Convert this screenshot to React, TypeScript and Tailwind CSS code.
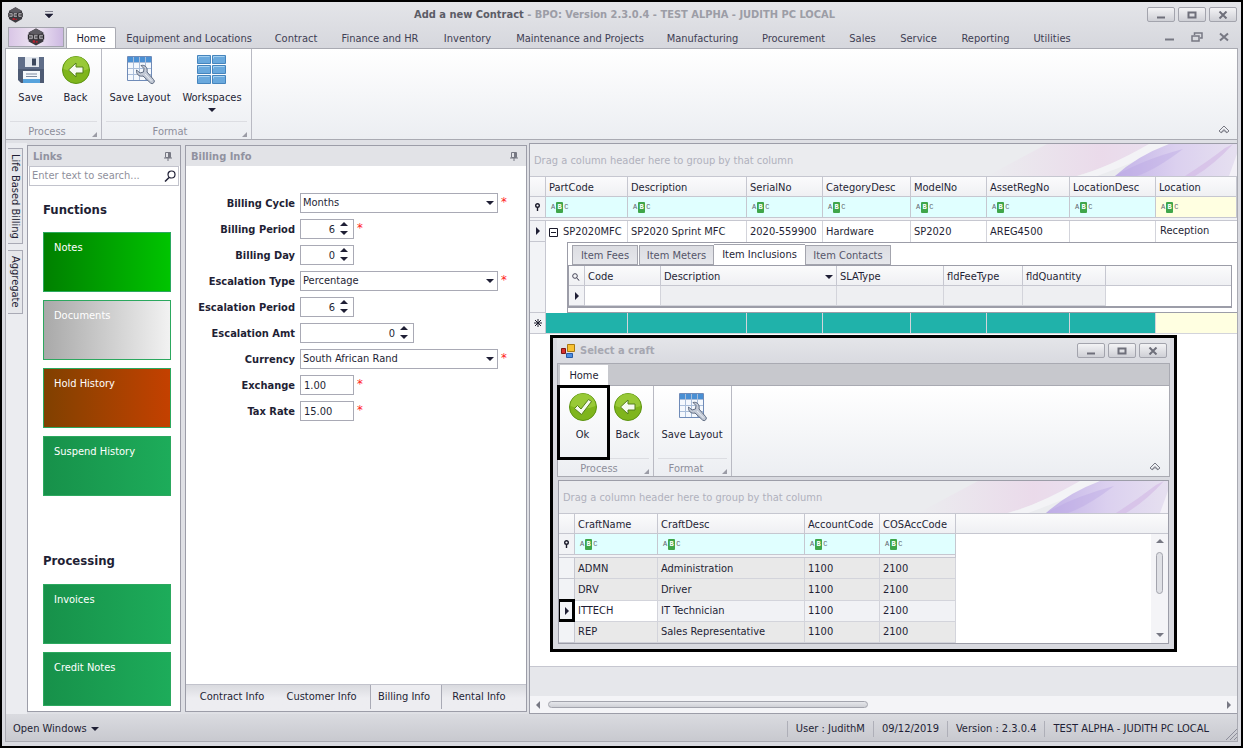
import React, { useState } from 'react';
import clsx from 'clsx';

const ribbonTabs = [
  { label: 'Equipment and Locations', width: 'w-[146px]' },
  { label: 'Contract', width: 'w-[68px]' },
  { label: 'Finance and HR', width: 'w-[100px]' },
  { label: 'Inventory', width: 'w-[75px]' },
  { label: 'Maintenance and Projects', width: 'w-[150px]' },
  { label: 'Manufacturing', width: 'w-[95px]' },
  { label: 'Procurement', width: 'w-[87px]' },
  { label: 'Sales', width: 'w-[51px]' },
  { label: 'Service', width: 'w-[61px]' },
  { label: 'Reporting', width: 'w-[73px]' },
  { label: 'Utilities', width: 'w-[60px]' },
];

const functionTiles = [
  { label: 'Notes', style: 'h-[60px] from-[#008000] to-[#00c400]' },
  { label: 'Documents', style: 'h-[60px] from-[#a9a9a9] to-[#f2f2f2]' },
  { label: 'Hold History', style: 'h-[60px] from-[#804000] to-[#c44000]' },
  { label: 'Suspend History', style: 'h-[60px] from-[#17914a] to-[#1dac5a]' },
];

const processingTiles = [
  { label: 'Invoices', style: 'h-[60px] from-[#17914a] to-[#1dac5a]' },
  { label: 'Credit Notes', style: 'h-[54px] from-[#17914a] to-[#1dac5a]' },
];

const itemColumns = [
  { name: 'PartCode', width: 'w-[82px]' },
  { name: 'Description', width: 'w-[119px]' },
  { name: 'SerialNo', width: 'w-[76px]' },
  { name: 'CategoryDesc', width: 'w-[88px]' },
  { name: 'ModelNo', width: 'w-[76px]' },
  { name: 'AssetRegNo', width: 'w-[83px]' },
  { name: 'LocationDesc', width: 'w-[86px]' },
  { name: 'Location', width: '' },
];

const craftColumns = [
  { name: 'CraftName', width: 'w-[83px]' },
  { name: 'CraftDesc', width: 'w-[147px]' },
  { name: 'AccountCode', width: 'w-[75px]' },
  { name: 'COSAccCode', width: 'w-[76px]' },
];

const crafts = [
  ['ADMN', 'Administration', '1100', '2100'],
  ['DRV', 'Driver', '1100', '2100'],
  ['ITTECH', 'IT Technician', '1100', '2100'],
  ['REP', 'Sales Representative', '1100', '2100'],
];

const headCell = 'h-5 border-r border-b border-[#c6c7d0] bg-linear-to-b from-[#fbfbfc] to-[#eff0f3] px-[3px] pt-0.5 text-left font-normal whitespace-nowrap';
const sideCell = 'border-r border-b border-[#c6c7d0] bg-[#f2f3f6]';

/* ---------- icons ---------- */

const LogoIcon = ({ className }: { className: string }) => (
  <svg viewBox="0 0 20 22" className={className} aria-hidden="true">
    <path d="M10 0.5 19 5.5V16.5L10 21.5 1 16.5V5.5Z" fill="#3c3a40" />
    <path d="M10 0.5 19 5.5 10 10 1 5.5Z" fill="#5d5b62" />
    <path d="M0 8h20v6H0z" fill="#2a282c" />
    <path d="M1.500 9h4M1.500 11h4M1.500 13h4M5.500 9v4M8 9h4M8 11h4M8 13h4M8 9v4M14.500 9h4M14.500 11h4M14.500 13h4M14.500 9v4" stroke="#c9c6cc" strokeWidth="1" fill="none" />
    <path d="M6 15h3v3H6zM10 16h2v2h-2z" fill="#b3202c" />
  </svg>
);

const SaveIcon = () => (
  <svg width="28" height="28" viewBox="0 0 28 28" aria-hidden="true">
    <path d="M1 1h26v26H4L1 24Z" fill="#4d5a73" />
    <path d="M1 1h26v12H1z" fill="#5f6d88" />
    <path d="M8 1h14v10H8z" fill="#e3e8ef" />
    <path d="M15 2.500h4v7h-4z" fill="#3d485e" />
    <path d="M6 15h17v12H6z" fill="#f5f8fc" />
    <path d="M6 23h17v4H6z" fill="#57a3dd" />
    <path d="M9 18h11M9 20.500h11" stroke="#7e8aa0" />
  </svg>
);

const GreenDisc = ({ children }: { children: React.ReactNode }) => (
  <svg width="28" height="28" viewBox="0 0 28 28" aria-hidden="true">
    <circle cx="14" cy="14" r="13.5" fill="#7fb51c" stroke="#5c9310" />
    <path d="M1.500 13a12.500 12.500 0 0 1 25 0q-12.500 5-25 0" fill="#a3d143" opacity="0.7" />
    {children}
  </svg>
);

const BackIcon = () => (
  <GreenDisc>
    <path d="M6.500 14 14 7v4h7v6h-7v4Z" fill="#f6faf0" stroke="#55801a" strokeLinejoin="round" />
  </GreenDisc>
);

const OkIcon = () => (
  <GreenDisc>
    <path d="M5.500 15.500 8.500 12.500 12 16 19.500 6.500 22.500 8.500 12.500 21.500Z" fill="#f6faf0" stroke="#55801a" strokeLinejoin="round" />
  </GreenDisc>
);

const SaveLayoutIcon = () => (
  <svg width="30" height="30" viewBox="0 0 30 30" aria-hidden="true">
    <path d="M2.500 1.500h24v24h-24z" fill="#f4f8fd" stroke="#6f8bb8" />
    <path d="M3 2h23v5H3z" fill="#4a90d4" />
    <path d="M3 7.500h23M3 13.500h23M3 19.500h23M8.500 2v23M14.500 2v23M20.500 2v23" stroke="#a9bdd9" />
    <path d="M16 10.500c4-1 7 2 6 6.500l6.500 7.500a2.200 2.200 0 0 1-3 3.500l-7.500-7c-4 1-7-2-6.500-6l3.500 3 3.500-1 .500-3.500Z" fill="#c3cad6" stroke="#5d6a80" strokeLinejoin="round" />
    <path d="M20 19l6.500 7" stroke="#e9edf3" />
  </svg>
);

const WorkspacesIcon = () => (
  <svg width="30" height="30" viewBox="0 0 30 30" aria-hidden="true">
    {[0.5, 10.5, 20.5].map((y) => (
      <g key={y} fill="#6aa9dd" stroke="#4685bd">
        <path d={`M.5 ${y}h13v8h-13z`} />
        <path d={`M15.500 ${y}h13v8h-13z`} />
        <path d={`M1.500 ${y + 3}v-2h11M16.500 ${y + 3}v-2h11`} fill="none" stroke="#a5d0f0" />
      </g>
    ))}
  </svg>
);

const Triangle = ({ dir, className }: { dir: 'up' | 'down' | 'left' | 'right'; className?: string }) => {
  const paths = {
    up: 'M0 5 4 1 8 5Z',
    down: 'M0 2h8L4 6Z',
    left: 'M6 0v8L2 4Z',
    right: 'M2 0v8l4-4Z',
  };
  return (
    <svg width="8" height="8" viewBox="0 0 8 8" className={clsx('shrink-0', className)} aria-hidden="true">
      <path d={paths[dir]} fill="currentColor" />
    </svg>
  );
};

const PinIcon = () => (
  <svg width="8" height="9" viewBox="0 0 8 9" aria-hidden="true">
    <path d="M1.500.5h5v5h-5zM0 6h8M4 6v3" fill="none" stroke="#777883" />
    <path d="M4 1h2.500v4.500H4z" fill="#777883" />
  </svg>
);

const FilterPin = () => (
  <svg width="7" height="8" viewBox="0 0 7 8" className="mx-auto" aria-hidden="true">
    <circle cx="3.5" cy="2.500" r="1.800" fill="none" stroke="#1b1b2b" strokeWidth="1.400" />
    <path d="M3.500 4v4" stroke="#1b1b2b" strokeWidth="1.400" />
  </svg>
);

const SearchIcon = ({ className }: { className: string }) => (
  <svg viewBox="0 0 12 12" className={className} aria-hidden="true">
    <circle cx="7.500" cy="4.500" r="3.500" fill="none" stroke="currentColor" strokeWidth="1.200" />
    <path d="M5 7.500 1 11.500" stroke="currentColor" strokeWidth="1.500" />
  </svg>
);

const CollapseIcon = () => (
  <svg width="12" height="10" viewBox="0 0 12 10" aria-hidden="true">
    <path d="M1 6 6 1l5 5-2 1.500-3-3-3 3ZM3 8 6 5.500 9 8" fill="none" stroke="#777883" />
  </svg>
);

const FormIcon = () => (
  <svg width="14" height="14" viewBox="0 0 14 14" aria-hidden="true">
    <path d="M.5 4.500h4v5h-4z" fill="#d8302c" stroke="#7d1512" />
    <path d="M6.500.5h7v7h-7z" fill="#f7c234" stroke="#a87912" />
    <path d="M5.500 9.500h6v4h-6z" fill="#4d8de0" stroke="#275aa5" />
  </svg>
);

const Swoosh = ({ id }: { id: string }) => (
  <svg width="250" height="32" viewBox="0 0 250 32" className="shrink-0" aria-hidden="true">
    <defs>
      <linearGradient id={id} x1="0" x2="1">
        <stop offset="0" stopColor="#ebecef" />
        <stop offset="0.7" stopColor="#ead6e9" />
        <stop offset="1" stopColor="#e9dcee" />
      </linearGradient>
      <linearGradient id={`${id}-b`} x1="0" x2="1">
        <stop offset="0" stopColor="#c3b3e8" />
        <stop offset="0.5" stopColor="#dbd0ef" />
        <stop offset="1" stopColor="#e6e0f0" />
      </linearGradient>
    </defs>
    <path d="M0 32 60 0h105Q130 20 90 32Z" fill={`url(#${id})`} opacity="0.8" />
    <path d="M110 32Q160 14 182 0h-20Q120 24 90 32Z" fill="#f3f3f6" />
    <path d="M128 32Q150 12 182 0H250V32Z" fill={`url(#${id}-b)`} />
    <path d="M128 32Q155 16 196 5q-26 20-46 27Z" fill="#b8a5e4" opacity="0.4" />
    <path d="M198 32Q220 18 238 4l8-4Q228 20 208 32Z" fill="#d2b8e4" opacity="0.6" />
    <path d="M250 10v22h-8Z" fill="#f3f1f7" />
  </svg>
);

/* ---------- small pieces ---------- */

const AbcMark = () => (
  <span className="flex items-center gap-px font-['Liberation_Mono',monospace] text-[7px] leading-[11px] text-[#5f656c]">
    A<span className="flex h-[11px] w-[7px] items-center justify-center rounded-[1px] bg-[#3fa64a] font-bold text-white">B</span>C
  </span>
);

const WindowButtons = () => {
  const base = 'flex h-[15px] w-7 items-center justify-center rounded-[2px] border border-[#a3a4ad] bg-linear-to-b from-[#f3f3f5] to-[#cfd0d6]';
  return (
    <div className="flex gap-[3px] text-[#6e6f7a]">
      <button type="button" aria-label="Minimize" className={base}>
        <svg width="10" height="8" viewBox="0 0 10 8"><path d="M1 6.500h8" stroke="currentColor" strokeWidth="2" /></svg>
      </button>
      <button type="button" aria-label="Maximize" className={base}>
        <svg width="10" height="8" viewBox="0 0 10 8"><path d="M1.500 1.500h7v5h-7z" fill="none" stroke="currentColor" strokeWidth="2" /></svg>
      </button>
      <button type="button" aria-label="Close" className={base}>
        <svg width="10" height="8" viewBox="0 0 10 8"><path d="M1.500.5 8.500 7.500M8.500.5 1.500 7.500" stroke="currentColor" strokeWidth="2" /></svg>
      </button>
    </div>
  );
};

interface RibbonButtonProps {
  label: string;
  icon: React.ReactNode;
  wide?: boolean;
  hasMenu?: boolean;
}

const RibbonButton: React.FC<RibbonButtonProps> = ({ label, icon, wide, hasMenu }) => (
  <button type="button" className={clsx('flex flex-col items-center pt-1.5', wide ? 'w-[72px]' : 'w-[45px]')}>
    <span className="flex h-[30px] items-center">{icon}</span>
    <span className="mt-[5px] leading-4 whitespace-nowrap">{label}</span>
    {hasMenu && <Triangle dir="down" />}
  </button>
);

const RibbonGroup = ({ caption, children }: { caption: string; children: React.ReactNode }) => (
  <div className="flex flex-col border-r border-[#b9bac3]">
    <div className="flex flex-1 pr-[3px] pl-0.5">{children}</div>
    <div className="mx-1 flex h-[18px] items-center border-t border-[#dcdde2] text-[#8d8e9b]">
      <span className="flex-1 pt-0.5 pr-2 text-center">{caption}</span>
      <svg width="5" height="5" viewBox="0 0 5 5" className="mt-2" aria-hidden="true"><path d="M5 0v5H0Z" fill="#9b9ca6" /></svg>
    </div>
  </div>
);

const PanelHeader = ({ title }: { title: string }) => (
  <div className="flex h-5 items-center justify-between bg-[#e2e3e7] pr-2 pl-[5px]">
    <h2 className="pt-0.5 font-bold text-[#9192a0]">{title}</h2>
    <PinIcon />
  </div>
);

const Tile = ({ label, style }: { label: string; style: string }) => (
  <button type="button" className={clsx('flex items-start border border-[#2ca85f] bg-linear-to-r px-2.5 pt-2 leading-[14px] text-white', style)}>
    {label}
  </button>
);

const GroupBar = ({ id }: { id: string }) => (
  <div className="flex h-[33px] items-center justify-between border-b border-[#c6c7d0] bg-[#ebecef] pl-1">
    <span className="pt-0.5 text-[#b0b1bd]">Drag a column header here to group by that column</span>
    <Swoosh id={id} />
  </div>
);

interface FieldProps {
  id: string;
  label: string;
  value: string;
  required?: boolean;
}

const Star = () => <span className="ml-[3px] self-start text-[13px] leading-[18px] text-[#ff1a1a]">*</span>;

const FieldRow = ({ id, label, required, children }: { id: string; label: string; required?: boolean; children: React.ReactNode }) => (
  <div className="flex h-5 items-center">
    <label htmlFor={id} className="w-[114px] pt-0.5 pr-[5px] text-right font-bold whitespace-nowrap">{label}</label>
    {children}
    {required && <Star />}
  </div>
);

const SelectField: React.FC<FieldProps> = ({ id, label, value, required }) => (
  <FieldRow id={id} label={label} required={required}>
    <span className="relative flex">
      <select id={id} className="h-5 w-[198px] appearance-none border border-[#a9aab5] bg-white px-0.5 leading-[18px]">
        <option>{value}</option>
      </select>
      <Triangle dir="down" className="pointer-events-none absolute top-1.5 right-1" />
    </span>
  </FieldRow>
);

const SpinField: React.FC<FieldProps & { wide?: boolean }> = ({ id, label, value, required, wide }) => {
  const [count, setCount] = useState(Number(value));
  return (
    <FieldRow id={id} label={label} required={required}>
      <span className={clsx('flex h-5 border border-[#a9aab5] bg-white', wide ? 'w-[114px]' : 'w-[54px]')}>
        <input id={id} type="text" inputMode="numeric" value={count} onChange={(e) => setCount(Number(e.target.value) || 0)} className="w-0 flex-1 pt-px text-right" />
        <span className="flex w-[18px] flex-col items-center justify-between py-px">
          <button type="button" aria-label={`Increase ${label}`} onClick={() => setCount(count + 1)} className="h-2"><Triangle dir="up" /></button>
          <button type="button" aria-label={`Decrease ${label}`} onClick={() => setCount(count - 1)} className="h-2"><Triangle dir="down" /></button>
        </span>
      </span>
    </FieldRow>
  );
};

const TextField: React.FC<FieldProps> = ({ id, label, value, required }) => (
  <FieldRow id={id} label={label} required={required}>
    <input id={id} type="text" defaultValue={value} className="h-5 w-[54px] border border-[#a9aab5] bg-white px-[3px]" />
  </FieldRow>
);

/* ---------- panels ---------- */

const LinksPanel = () => (
  <section className="flex w-[154px] shrink-0 flex-col border border-[#9c9da8] bg-white">
    <PanelHeader title="Links" />
    <div className="mx-px flex h-5 items-center border border-[#c2c3cc] pr-0.5 pl-0.5">
      <input type="search" aria-label="Search links" placeholder="Enter text to search..." className="w-0 flex-1 placeholder:text-[#8f909c]" />
      <SearchIcon className="size-3" />
    </div>
    <div className="flex flex-col gap-2 pt-4 pr-[9px] pl-[15px]">
      <h3 className="mb-1.5 text-[13px] leading-4 font-bold">Functions</h3>
      {functionTiles.map((tile) => <Tile key={tile.label} {...tile} />)}
    </div>
    <div className="flex flex-col gap-2 pt-14 pr-[9px] pb-[5px] pl-[15px]">
      <h3 className="mb-1.5 text-[13px] leading-[18px] font-bold">Processing</h3>
      {processingTiles.map((tile) => <Tile key={tile.label} {...tile} />)}
    </div>
  </section>
);

const BillingPanel = () => (
  <section className="flex w-[342px] shrink-0 flex-col border border-[#9c9da8] bg-white">
    <PanelHeader title="Billing Info" />
    <form className="flex flex-1 flex-col gap-1.5 pt-[27px]">
      <SelectField id="cycle" label="Billing Cycle" value="Months" required />
      <SpinField id="period" label="Billing Period" value="6" required />
      <SpinField id="day" label="Billing Day" value="0" />
      <SelectField id="escType" label="Escalation Type" value="Percentage" required />
      <SpinField id="escPeriod" label="Escalation Period" value="6" />
      <SpinField id="escAmt" label="Escalation Amt" value="0" wide />
      <SelectField id="currency" label="Currency" value="South African Rand" required />
      <TextField id="exchange" label="Exchange" value="1.00" required />
      <TextField id="tax" label="Tax Rate" value="15.00" required />
    </form>
    <nav className="flex h-[27px] items-start border-t border-[#c2c3cc] bg-linear-to-b from-[#d9dadf] to-[#ededf1] to-50% pl-px leading-6">
      <button type="button" className="w-[90px]">Contract Info</button>
      <button type="button" className="w-[94px] border-r border-[#a9aab5] pr-1">Customer Info</button>
      <button type="button" className="w-[71px] border-r border-[#a9aab5] bg-[#ededf1] pr-1">Billing Info</button>
      <button type="button" className="w-[74px]">Rental Info</button>
    </nav>
  </section>
);

const InclusionsDetail = () => {
  const tab = 'h-5 border border-[#a3a4ad] bg-linear-to-b from-[#dcdde2] to-[#e6e7eb] pt-0.5 text-[#55566a]';
  const lockedCell = 'border-r border-b border-[#d3d4db] bg-[#eeeff2]';
  return (
    <div className="ml-[21px] border border-r-0 border-[#9c9da8] bg-white pt-px pb-1">
      <div className="flex h-[21px] items-end pl-1">
        <button type="button" className={clsx(tab, 'w-[66px]')}>Item Fees</button>
        <button type="button" className={clsx(tab, 'ml-px w-[75px]')}>Item Meters</button>
        <button type="button" className="h-[21px] w-[91px] border-t border-[#a3a4ad] bg-white">Item Inclusions</button>
        <button type="button" className={clsx(tab, 'w-[86px]')}>Item Contacts</button>
      </div>
      <div className="mr-[5px] border border-b-2 border-[#9c9da8]">
        <table className="w-full table-fixed border-separate border-spacing-0">
          <thead>
            <tr>
              <th className={clsx(headCell, 'w-4')}><SearchIcon className="size-2 -scale-x-100" /></th>
              <th className={clsx(headCell, 'w-[76px]')}>Code</th>
              <th className={clsx(headCell, 'w-[176px]')}>
                <span className="flex items-center justify-between">Description <Triangle dir="down" /></span>
              </th>
              <th className={clsx(headCell, 'w-[107px]')}>SLAType</th>
              <th className={clsx(headCell, 'w-[79px]')}>fldFeeType</th>
              <th className={clsx(headCell, 'w-[83px]')}>fldQuantity</th>
              <th className={clsx(headCell, 'border-r-0')} />
            </tr>
          </thead>
          <tbody>
            <tr>
              <td className={clsx(sideCell, 'h-5')}><Triangle dir="right" className="mx-auto" /></td>
              <td className="border-r border-b border-[#d3d4db]" />
              <td className={lockedCell} />
              <td className={lockedCell} />
              <td className={lockedCell} />
              <td className={lockedCell} />
              <td />
            </tr>
          </tbody>
        </table>
      </div>
    </div>
  );
};

const ItemsTable = () => {
  const cell = 'h-[21px] border-r border-[#d3d4db] px-[3px] pt-px whitespace-nowrap';
  return (
    <table className="w-full table-fixed border-separate border-spacing-0">
      <thead>
        <tr>
          <th className={clsx(headCell, 'w-4')} />
          {itemColumns.map((col) => (
            <th key={col.name} className={clsx(headCell, col.width)}>{col.name}</th>
          ))}
        </tr>
        <tr>
          <td className={clsx(sideCell, 'h-[21px]')}><FilterPin /></td>
          {itemColumns.map((col) => (
            <td key={col.name} className={clsx('border-r border-b border-[#c6c7d0] px-[5px]', col.name === 'Location' ? 'bg-[#ffffe1]' : 'bg-[#e0ffff]')}>
              <AbcMark />
            </td>
          ))}
        </tr>
        <tr><td colSpan={9} className="h-[3px] border-b border-[#c6c7d0] bg-[#f2f3f6]" /></tr>
      </thead>
      <tbody>
        <tr>
          <td className={sideCell}><Triangle dir="right" className="mx-auto" /></td>
          <td className={cell}>
            <span className="flex items-center gap-[5px]">
              <svg width="9" height="9" viewBox="0 0 9 9" className="shrink-0" aria-label="Collapse"><path d="M.5.5h8v8h-8zM2 4.500h5" fill="none" stroke="#1b1b2b" /></svg>
              SP2020MFC
            </span>
          </td>
          <td className={cell}>SP2020 Sprint MFC</td>
          <td className={cell}>2020-559900</td>
          <td className={cell}>Hardware</td>
          <td className={cell}>SP2020</td>
          <td className={cell}>AREG4500</td>
          <td className={cell} />
          <td className="px-1 pb-0.5">Reception</td>
        </tr>
        <tr>
          <td className={sideCell} />
          <td colSpan={8}><InclusionsDetail /></td>
        </tr>
        <tr>
          <td className={clsx(sideCell, 'h-[21px]')}>
            <svg width="8" height="8" viewBox="0 0 8 8" className="mx-auto" aria-hidden="true"><path d="M4 0v8M0 4h8M1 1l6 6M7 1 1 7" stroke="#1b1b2b" /></svg>
          </td>
          {itemColumns.map((col) => (
            <td key={col.name} className={clsx('border-b border-[#d3d4db]', col.name === 'Location' ? 'bg-[#ffffe1]' : 'border-r bg-[#20b2aa]')} />
          ))}
        </tr>
      </tbody>
    </table>
  );
};

const CraftTable = () => (
  <table className="w-full table-fixed border-separate border-spacing-0">
    <thead>
      <tr>
        <th className={clsx(headCell, 'w-4')} />
        {craftColumns.map((col) => (
          <th key={col.name} className={clsx(headCell, col.width)}>{col.name}</th>
        ))}
        <th className={clsx(headCell, 'border-r-0')} />
      </tr>
      <tr>
        <td className={clsx(sideCell, 'h-[21px]')}><FilterPin /></td>
        {craftColumns.map((col) => (
          <td key={col.name} className="border-r border-b border-[#c6c7d0] bg-[#e0ffff] px-[5px]"><AbcMark /></td>
        ))}
        <td />
      </tr>
      <tr>
        <td colSpan={5} className="h-[3px] border-r border-b border-[#c6c7d0] bg-[#f2f3f6]" />
        <td />
      </tr>
    </thead>
    <tbody>
      {crafts.map((row) => {
        const current = row[0] === 'ITTECH';
        return (
          <tr key={row[0]}>
            <td className={clsx(sideCell, 'relative h-[21px]')}>
              {current && (
                <>
                  <Triangle dir="right" className="mx-auto" />
                  <span className="absolute -top-0.5 -right-px -bottom-px -left-0.5 border-3 border-black" />
                </>
              )}
            </td>
            {row.map((value, i) => (
              <td
                key={i}
                className={clsx(
                  'border-r border-b border-[#d3d4db] px-[3px] pt-px whitespace-nowrap',
                  current ? (i === 0 ? 'bg-white' : 'bg-[#f1f2f5]') : 'bg-[#e9e9e9]',
                )}
              >
                {value}
              </td>
            ))}
            <td />
          </tr>
        );
      })}
    </tbody>
  </table>
);

const CraftDialog = () => (
  <div role="dialog" aria-label="Select a craft" className="absolute top-[191px] left-5 flex h-[317px] w-[627px] flex-col border-3 border-black bg-[#d9dae0] px-1 pb-[5px]">
    <div className="flex h-[25px] shrink-0 items-center justify-between bg-linear-to-b from-[#e4e5e9] to-[#d9dae0] pr-[3px] pl-1">
      <div className="flex items-center gap-[5px]">
        <FormIcon />
        <h2 className="font-bold text-[#a6a7b1]">Select a craft</h2>
      </div>
      <WindowButtons />
    </div>
    <div className="flex h-[23px] shrink-0 items-end border border-[#a9aab2] bg-[#c7c8cd] pl-0.5">
      <button type="button" className="h-5 w-12 bg-white pt-0.5">Home</button>
    </div>
    <div className="relative flex h-[91px] shrink-0 border-x border-b border-[#a9aab2] bg-linear-to-b from-white to-[#eceef2]">
      <RibbonGroup caption="Process">
        <RibbonButton label="Ok" icon={<OkIcon />} />
        <RibbonButton label="Back" icon={<BackIcon />} />
      </RibbonGroup>
      <RibbonGroup caption="Format">
        <RibbonButton label="Save Layout" icon={<SaveLayoutIcon />} wide />
      </RibbonGroup>
      <button type="button" aria-label="Collapse ribbon" className="mt-auto mr-2 mb-1 ml-auto"><CollapseIcon /></button>
      <span className="pointer-events-none absolute -top-px -left-px h-[75px] w-[53px] border-3 border-black" />
    </div>
    <div className="mx-px mt-[3px] flex flex-1 flex-col overflow-hidden border border-[#9c9da8] bg-white">
      <GroupBar id="craft-swoosh" />
      <div className="flex flex-1">
        <CraftTable />
        <div className="flex w-[17px] shrink-0 flex-col">
          <div className="h-5 border-b border-[#c6c7d0] bg-linear-to-b from-[#fbfbfc] to-[#eff0f3]" />
          <div className="flex flex-1 flex-col items-center bg-[#f4f4f7] py-1 text-[#777883]">
            <Triangle dir="up" />
            <div className="mt-1.5 h-[42px] w-[7px] rounded-full border border-[#a3a4ad] bg-[#dfe0e5]" />
            <Triangle dir="down" className="mt-auto" />
          </div>
        </div>
      </div>
    </div>
  </div>
);

const App: React.FC = () => {
  return (
    <div className="flex min-h-screen flex-col border-2 border-black bg-[#d9dae0] pb-1 font-['DejaVu_Sans_Condensed','DejaVu_Sans',sans-serif] text-[11px] leading-4 text-[#1f1f35]">
      <header className="bg-linear-to-b from-[#e4e5e9] to-[#d6d7dd] px-1">
        <div className="flex h-[25px] items-center">
          <div className="flex w-24 items-center gap-[22px] pl-0.5">
            <LogoIcon className="h-4 w-[15px]" />
            <svg width="8" height="7" viewBox="0 0 8 7" aria-hidden="true"><path d="M0 .5h8M0 3h8L4 7Z" fill="#1f1f35" stroke="#1f1f35" strokeWidth="0.500" /></svg>
          </div>
          <h1 className="flex-1 text-center font-bold text-[#9c9da6]">
            <span className="text-[#5b5c66]">Add a new Contract</span> - BPO: Version 2.3.0.4 - TEST ALPHA - JUDITH PC LOCAL
          </h1>
          <WindowButtons />
        </div>
        <div className="flex h-[21px] items-end">
          <button type="button" aria-label="Application menu" className="mb-px ml-0.5 flex h-5 w-14 items-center justify-center border border-[#a3a4ad] bg-linear-to-r from-[#d9c6e6] via-[#efe6f3] to-[#cdb9e2]">
            <LogoIcon className="h-[18px] w-5" />
          </button>
          <nav className="ml-0.5 flex flex-1 text-[#3f4054]">
            <button type="button" className="h-[21px] w-[50px] rounded-t-[2px] border border-b-0 border-[#a9aab2] bg-white pt-px text-[#1f1f35]">Home</button>
            {ribbonTabs.map((tab) => (
              <button key={tab.label} type="button" className={clsx('pt-0.5 whitespace-nowrap', tab.width)}>{tab.label}</button>
            ))}
          </nav>
          <div className="flex items-center gap-4 pr-2 pb-1.5 text-[#777883]">
            <button type="button" aria-label="Minimize window"><svg width="10" height="10" viewBox="0 0 10 10"><path d="M0 7.500h9" stroke="currentColor" strokeWidth="2" /></svg></button>
            <button type="button" aria-label="Restore window"><svg width="12" height="10" viewBox="0 0 12 10"><path d="M3.500 3V1h7.500v5H9M1 4h7v5H1z" fill="none" stroke="currentColor" strokeWidth="1.500" /></svg></button>
            <button type="button" aria-label="Close window"><svg width="10" height="10" viewBox="0 0 10 10"><path d="M1 1.500 9 8.500M9 1.500 1 8.500" stroke="currentColor" strokeWidth="2" /></svg></button>
          </div>
        </div>
      </header>

      <div className="mx-[3px] flex h-[92px] border border-[#a9aab2] bg-linear-to-b from-white to-[#eceef2]">
        <RibbonGroup caption="Process">
          <RibbonButton label="Save" icon={<SaveIcon />} />
          <RibbonButton label="Back" icon={<BackIcon />} />
        </RibbonGroup>
        <RibbonGroup caption="Format">
          <RibbonButton label="Save Layout" icon={<SaveLayoutIcon />} wide />
          <RibbonButton label="Workspaces" icon={<WorkspacesIcon />} wide hasMenu />
        </RibbonGroup>
        <button type="button" aria-label="Collapse ribbon" className="mt-auto mr-[7px] mb-1 ml-auto"><CollapseIcon /></button>
      </div>

      <main className="mx-[3px] flex flex-1 border-x border-[#a9aab2] bg-[#dfe0e5] pt-[3px]">
        <nav className="flex w-[21px] shrink-0 flex-col gap-1.5 bg-[#ebecf0] pt-[5px] pl-0.5">
          <button type="button" className="h-24 w-[15px] border border-l-0 border-[#a9aab5] bg-[#e6e7eb] leading-[14px] [writing-mode:vertical-rl]">Life Based Billing</button>
          <button type="button" className="h-16 w-[15px] border border-l-0 border-[#a9aab5] bg-[#e6e7eb] leading-[14px] [writing-mode:vertical-rl]">Aggregate</button>
        </nav>
        <div className="flex gap-1 pt-0.5 pr-0.5 pb-0.5">
          <LinksPanel />
          <BillingPanel />
        </div>
        <section className="relative flex min-w-0 flex-1 flex-col border-y border-l border-[#9c9da8] bg-white">
          <GroupBar id="items-swoosh" />
          <ItemsTable />
          <div className="mt-auto h-[30px] border-t border-[#c6c7d0] bg-[#e6e7eb]" />
          <div className="flex h-[17px] items-center bg-[#f4f4f7] px-1 text-[#777883]">
            <Triangle dir="left" />
            <div className="ml-1.5 h-[7px] w-[320px] rounded-full border border-[#a3a4ad] bg-linear-to-b from-[#e6e7eb] to-[#cfd0d6]" />
            <Triangle dir="right" className="ml-auto" />
          </div>
          <CraftDialog />
        </section>
      </main>

      <footer className="mx-[3px] flex h-7 items-center border border-t-0 border-[#a9aab2] bg-linear-to-b from-[#dadbe0] to-[#c8c9cf] pt-0.5 pl-[7px]">
        <button type="button" className="flex items-center gap-1">Open Windows <Triangle dir="down" /></button>
        <div className="ml-auto flex [&>span]:border-l [&>span]:border-[#aeafb8] [&>span]:px-2">
          <span>User : JudithM</span>
          <span>09/12/2019</span>
          <span>Version : 2.3.0.4</span>
          <span>TEST ALPHA - JUDITH PC LOCAL</span>
        </div>
        <svg width="12" height="12" viewBox="0 0 12 12" className="mt-2.5 ml-2" aria-hidden="true"><path d="M1 12 12 1M5 12l7-7M9 12l3-3" stroke="#8d8e9b" /></svg>
      </footer>
    </div>
  );
};

export default App;
